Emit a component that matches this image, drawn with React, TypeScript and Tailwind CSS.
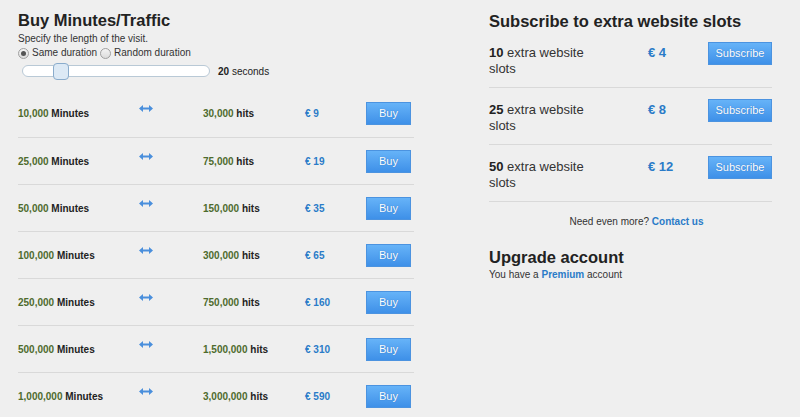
const packages = [
  { minutes: "10,000", hits: "30,000", price: "9" },
  { minutes: "25,000", hits: "75,000", price: "19" },
  { minutes: "50,000", hits: "150,000", price: "35" },
  { minutes: "100,000", hits: "300,000", price: "65" },
  { minutes: "250,000", hits: "750,000", price: "160" },
  { minutes: "500,000", hits: "1,500,000", price: "310" },
  { minutes: "1,000,000", hits: "3,000,000", price: "590" },
];

const slots = [
  { count: "10", price: "4" },
  { count: "25", price: "8" },
  { count: "50", price: "12" },
];

const Arrow = () => (
  <svg width="14" height="7" viewBox="0 0 14 7" className="mb-[10px]">
    <path d="M3 3.5h8" stroke="#4a8fdc" strokeWidth="2" />
    <path d="M0 3.5L4 0v7z M14 3.5L10 0v7z" fill="#4a8fdc" />
  </svg>
);

const BlueButton = ({ label, w }: { label: string; w: string }) => (
  <button
    className={`${w} h-[23px] border border-[#4b93e0] bg-gradient-to-b from-[#66b3f8] to-[#3e90e8] text-white text-[11px] font-normal [text-shadow:0_0_1px_rgba(0,60,140,0.5)]`}
  >
    {label}
  </button>
);

const Radio = ({ checked }: { checked?: boolean }) => (
  <span className="inline-flex w-[11px] h-[11px] rounded-full border border-[#a0a0a0] bg-gradient-to-b from-[#f4f4f4] to-[#dcdcdc] items-center justify-center">
    {checked && <span className="w-[5px] h-[5px] rounded-full bg-[#555]" />}
  </span>
);

export default function App() {
  return (
    <div
      className="w-[800px] h-[417px] overflow-hidden bg-[#efefef] text-[#222] flex"
      style={{ fontFamily: '"Liberation Sans", Arial, sans-serif' }}
    >
      <div className="w-[396px] ml-[18px] pt-[10px]">
        <h1 className="text-[16.5px] leading-[20px] font-bold">Buy Minutes/Traffic</h1>
        <p className="text-[10px] leading-[13px] text-[#333] mt-[2px]">Specify the length of the visit.</p>
        <div className="flex items-center gap-[3px] text-[10px] leading-[14px] text-[#333] mt-[1px]">
          <Radio checked />
          <span>Same duration</span>
          <Radio />
          <span>Random duration</span>
        </div>
        <div className="flex items-center mt-[2px] h-[18px]">
          <div className="ml-[4px] w-[188px] h-[12px] rounded-[6px] border border-[#b9c9d6] bg-white flex items-center">
            <span className="ml-[30px] w-[16px] h-[17px] rounded-[4px] border border-[#8aaccc] bg-[#dce9f5]" />
          </div>
          <span className="ml-[8px] text-[10px]">
            <b>20</b> seconds
          </span>
        </div>
        <div className="mt-[10px]">
          {packages.map((p, i) => (
            <div
              key={p.minutes}
              className={`${i === 0 ? "h-[48px]" : "h-[47px]"} flex items-center border-b border-[#d9d9d9] text-[10px] font-bold`}
            >
              <span className="w-[121px]">
                <span className="text-[#4e6b2d]">{p.minutes}</span> Minutes
              </span>
              <span className="w-[64px] flex">
                <Arrow />
              </span>
              <span className="w-[102px]">
                <span className="text-[#4e6b2d]">{p.hits}</span> hits
              </span>
              <span className="w-[61px] text-[#2a7bc8]">€ {p.price}</span>
              <BlueButton label="Buy" w="w-[45px]" />
            </div>
          ))}
        </div>
      </div>

      <div className="ml-[75px] w-[283px] pt-[12px]">
        <h2 className="text-[16.5px] leading-[19px] font-bold">Subscribe to extra website slots</h2>
        {slots.map((s) => (
          <div key={s.count} className="flex items-start pt-[14px] pb-[10px] border-b border-[#d9d9d9]">
            <span className="w-[159px] pr-[40px] text-[13px] leading-[16px] text-[#333]">
              <b className="text-[#222]">{s.count}</b>
              {" extra website slots"}
            </span>
            <span className="w-[60px] text-[13px] leading-[16px] font-bold text-[#2a7bc8]">€ {s.price}</span>
            <span className="-mt-[5px]">
              <BlueButton label="Subscribe" w="w-[64px]" />
            </span>
          </div>
        ))}
        <p className="text-center text-[10px] text-[#333] mt-[12px] pl-[12px]">
          Need even more? <span className="text-[#2a7bc8] font-bold">Contact us</span>
        </p>
        <h2 className="text-[16.5px] leading-[20px] font-bold mt-[18px]">Upgrade account</h2>
        <p className="text-[10px] leading-[13px] text-[#333] mt-[1px]">
          You have a <span className="text-[#2a7bc8] font-bold">Premium</span> account
        </p>
      </div>
    </div>
  );
}
